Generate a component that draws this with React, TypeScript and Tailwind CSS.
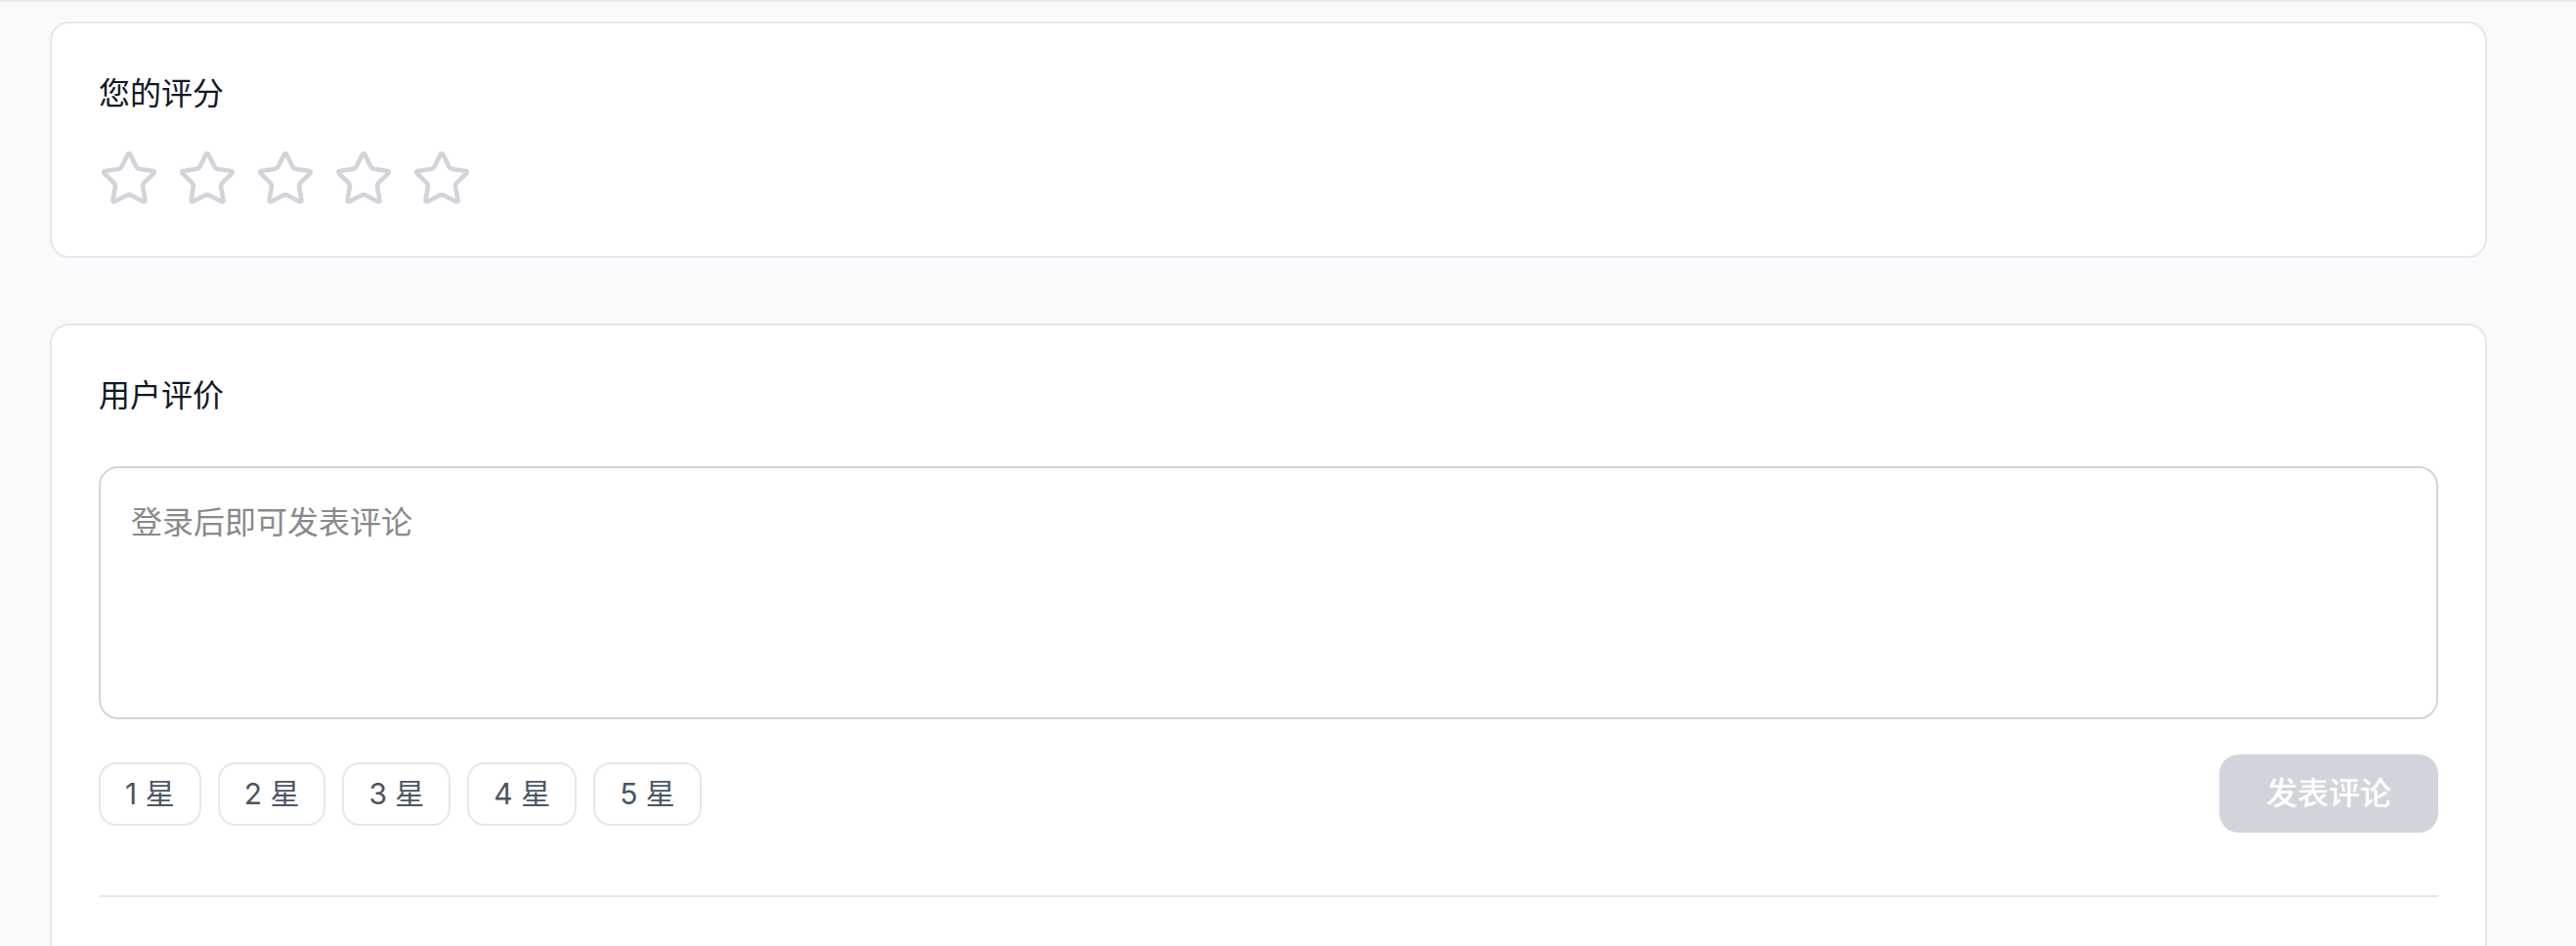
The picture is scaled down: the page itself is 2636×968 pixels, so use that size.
import { Star } from 'lucide-react';

const RATINGS = [1, 2, 3, 4, 5];

/** Rating + review panel: star picker on top, comment box with quick star chips below. */
export default function App() {
  return (
    <div className="min-h-screen bg-[#f9fafb] font-['Inter','Noto_Sans_CJK_SC',sans-serif]">
      <div className="h-[3px] bg-linear-to-b from-[#e6e7ea] to-[#f9fafb]" />
      <div className="pt-[19px] pl-[51px] pr-[91px]">
        <section className="rounded-[20px] border-2 border-[#e5e7eb] bg-white p-[48px]">
          <h2 className="text-[32px] leading-[47px] font-normal text-[#111827]">您的评分</h2>
          <div className="mt-[33px] flex h-[62px] gap-[18px]">
            {RATINGS.map((n) => (
              <button key={n} type="button" aria-label={`${n} 星`} className="block h-[62px] w-[62px]">
                <Star size={62} strokeWidth={1.8} className="text-[#d1d5db]" />
              </button>
            ))}
          </div>
        </section>

        <section className="mt-[67px] rounded-t-[20px] border-2 border-b-0 border-[#e5e7eb] bg-white px-[48px] pt-[48px]">
          <h2 className="text-[32px] leading-[47px] font-normal text-[#111827]">用户评价</h2>
          <textarea
            disabled
            placeholder="登录后即可发表评论"
            className="mt-[49px] block h-[259px] w-full resize-none rounded-[20px] border-2 border-[#d1d5db] bg-white px-[31px] py-[33px] text-[32px] leading-[45px] placeholder:text-[#8a8a8a]"
          />
          <div className="mt-[36px] flex h-[80px] items-center justify-between">
            <div className="flex gap-[17px]">
              {RATINGS.map((n) => (
                <button
                  key={n}
                  type="button"
                  className="h-[65px] rounded-[18px] border-2 border-[#e5e7eb] bg-white px-[25px] text-[30px] leading-[45px] text-[#4b5563]"
                >
                  {n} 星
                </button>
              ))}
            </div>
            <button
              type="button"
              disabled
              className="h-[80px] w-[224px] rounded-[20px] bg-[#d1d5db] text-[32px] font-medium text-white"
            >
              发表评论
            </button>
          </div>
          <div className="mt-[64px] h-[2px] bg-[#e5e7eb]" />
          <div className="h-[120px]" />
        </section>
      </div>
    </div>
  );
}
